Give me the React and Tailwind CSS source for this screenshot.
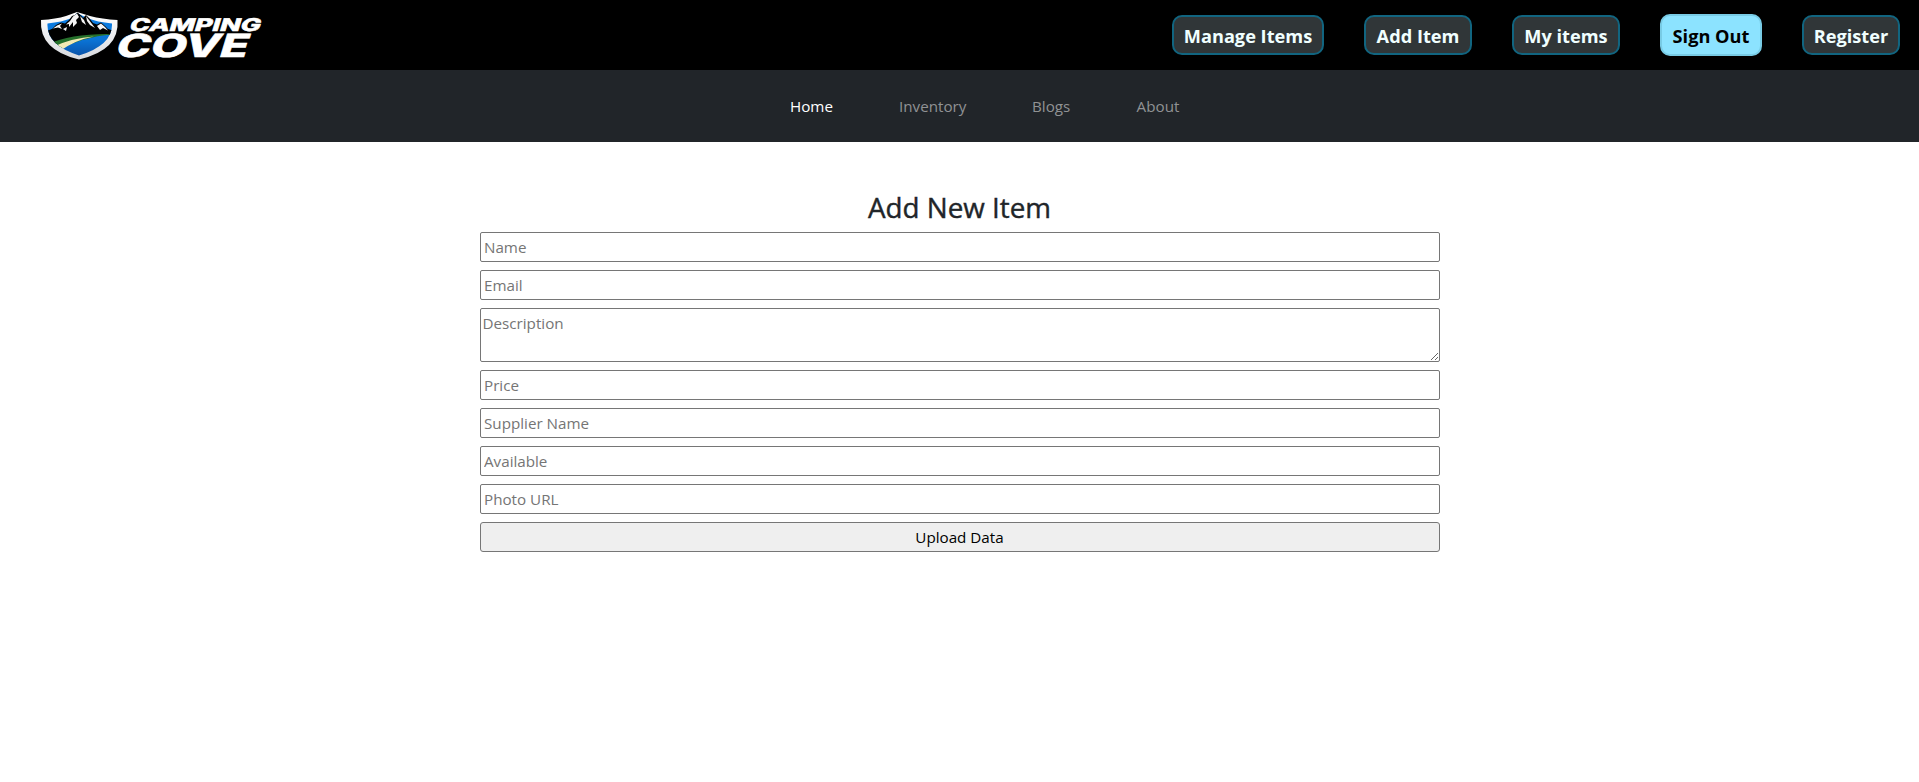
const buttons = [
  { label: 'Manage Items', size: 'w-[152px]' },
  { label: 'Add Item', size: 'w-[108px]' },
  { label: 'My items', size: 'w-[108px]' },
  { label: 'Sign Out', size: 'w-[102px]', active: true },
  { label: 'Register', size: 'w-[98px]' },
];

const links = [
  { label: 'Home', size: 'w-[43px]', active: true },
  { label: 'Inventory', size: 'w-[67px]' },
  { label: 'Blogs', size: 'w-[38px]' },
  { label: 'About', size: 'w-[44px]' },
];

function Logo() {
  return (
    <svg width="232" height="58" viewBox="36 6 232 58" role="img" aria-label="Camping Cove">
      <defs>
        <linearGradient id="water" x1="0" y1="0" x2="0" y2="1">
          <stop offset="0" stopColor="#0b80e6" />
          <stop offset="0.6" stopColor="#0a72d4" />
          <stop offset="1" stopColor="#0a4a9c" />
        </linearGradient>
        <linearGradient id="rim" x1="0" y1="0" x2="0" y2="1">
          <stop offset="0" stopColor="#ffffff" />
          <stop offset="1" stopColor="#d8dade" />
        </linearGradient>
        <clipPath id="inner">
          <path d="M47.500 23.500 Q62 22 72 18 L77 13 L87 18 Q97 22 112 23.500 Q113 45 79 55.500 Q46 45 47.500 23.500Z" />
        </clipPath>
      </defs>
      <path d="M41 20 Q56 19 66 16 L77 12 L90 16 Q102 19 117.500 20 Q120 50 79 59.500 Q39 50 41 20Z" fill="url(#rim)" />
      <g clipPath="url(#inner)">
        <rect x="40" y="12" width="80" height="48" fill="url(#water)" />
        <path d="M46 31 L52 29 H108 L114 31 V35 Q78 33 49 47Z" fill="#000" />
        <path d="M48 44 Q72 33 114 34 Q84 36 56 51Z" fill="#26702b" />
        <path d="M54 46.500 Q72 38 94 36.500 Q75 40 60 51Z" fill="#f3e9b5" />
      </g>
      <path d="M51 30 L56 25 L61 22.500 L65 23.500 L69 20 L72 16 L75 15 L77.500 12.500 L81 15.500 L83 18 L86 15 L90 19 L93 23 L97 24.500 L101 22.500 L105 26 L110 31Z" fill="#000" />
      <path
        d="M53 28.500 L57 25.500 L62 23.500 L60 26 L62 29 L58 27.500Z M66 24.500 L70 21 L73 16.500 L77 13.500 L79 17 L76 20 L77 23 L73 27 L73 22 L69 27 L69 24Z M80 16 L84 20 L86 25 L82 22Z M86 16 L89 20 L92 24 L95 28 L90 25 L87 21Z M97 26 L101 23.500 L105 27 L108 30.500 L103 28 L100 30Z M63 29 L67 27 L66 31Z"
        fill="#f4f4f4"
      />
      <g fontFamily="Inter, 'Liberation Sans', sans-serif" fontWeight="800" fill="#fff" stroke="#fff" strokeWidth="0.500">
        <text transform="translate(128.500 31) skewX(-17)" fontSize="17.500" textLength="131" lengthAdjust="spacingAndGlyphs">CAMPING</text>
        <text transform="translate(114 56.500) skewX(-17)" fontSize="32" textLength="132" lengthAdjust="spacingAndGlyphs">COVE</text>
      </g>
    </svg>
  );
}

function Field({ placeholder }) {
  return (
    <input
      placeholder={placeholder}
      className="h-[30px] w-full rounded-xs border border-[#767676] bg-white px-[3.5px] text-[15.2px] placeholder:text-[#757575]"
    />
  );
}

export default function App() {
  return (
    <div className="min-h-[782px] bg-white font-['Open_Sans','Noto_Sans',sans-serif] text-[15.2px] text-[#212529]">
      <header className="flex h-[70px] items-center justify-between bg-black pr-[19px] pl-9">
        <Logo />
        <div className="flex items-center gap-10">
          {buttons.map((b) => (
            <button
              key={b.label}
              className={
                'rounded-[10px] border-2 pt-[3px] text-center text-[18.2px] font-bold whitespace-nowrap ' +
                b.size +
                (b.active
                  ? ' h-[42px] border-[#78cbe5] bg-[#8ce3ff] text-black'
                  : ' h-10 border-[#116580] bg-[#303638] text-[#f0ffff]')
              }
            >
              {b.label}
            </button>
          ))}
        </div>
      </header>
      <nav className="flex h-[72px] items-center justify-center gap-[66px] bg-[#212529] pl-[51px]">
        {links.map((l) => (
          <a key={l.label} className={l.size + ' text-center whitespace-nowrap ' + (l.active ? 'text-white' : 'text-[#909294]')}>
            {l.label}
          </a>
        ))}
      </nav>
      <main className="mx-auto flex w-[960px] flex-col gap-2 pt-[48px]">
        <h2 className="h-[34px] text-center text-[27.8px] leading-[34px] font-medium [-webkit-text-stroke:0.4px_#212529]">
          Add New Item
        </h2>
        <Field placeholder="Name" />
        <Field placeholder="Email" />
        <textarea
          placeholder="Description"
          className="h-[54px] w-full resize rounded-xs border border-[#767676] bg-white p-[2px] text-[15.2px] leading-6 placeholder:text-[#757575]"
        />
        <Field placeholder="Price" />
        <Field placeholder="Supplier Name" />
        <Field placeholder="Available" />
        <Field placeholder="Photo URL" />
        <button className="h-[30px] rounded-[3px] border border-[#767676] bg-[#efefef] text-black">Upload Data</button>
      </main>
    </div>
  );
}
